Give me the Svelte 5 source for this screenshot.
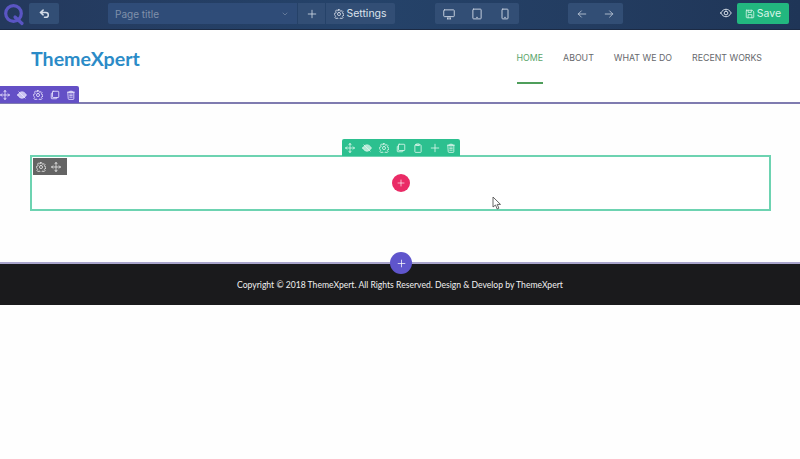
<script>
  const P = {
    move: 'M8 1v14M1 8h14M8 1 6 3M8 1l2 2M8 15l-2-2M8 15l2-2M1 8l2-2M1 8l2 2M15 8l-2-2M15 8l-2 2',
    eye: 'M1 8c2-3.500 4.500-5 7-5s5 1.500 7 5c-2 3.500-4.500 5-7 5s-5-1.500-7-5zM3 3l10 10',
    eyeopen: 'M1 8c2-3.500 4.500-5 7-5s5 1.500 7 5c-2 3.500-4.500 5-7 5s-5-1.500-7-5zM8 5.500a2.500 2.500 0 1 0 0 5 2.500 2.500 0 0 0 0-5z',
    gear: 'M6.800 1h2.400l.4 2 1.500.7 1.800-1.100 1.600 1.700-1.100 1.700.7 1.500 1.900.4v2.300l-1.900.4-.7 1.500 1.100 1.800-1.600 1.600-1.800-1.100-1.500.7-.4 1.900H6.800l-.4-1.900-1.500-.7-1.800 1.100-1.600-1.600 1.100-1.800-.7-1.500L.9 9.200V6.900l1.900-.4.7-1.500-1.100-1.700 1.600-1.700 1.800 1.100 1.500-.7zM8 5.500a2.500 2.500 0 1 0 0 5 2.500 2.500 0 0 0 0-5z',
    copy: 'M5 2h8a1 1 0 0 1 1 1v8a1 1 0 0 1-1 1H5a1 1 0 0 1-1-1V3a1 1 0 0 1 1-1zM4 5H3a1 1 0 0 0-1 1v7a1 1 0 0 0 1 1h7a1 1 0 0 0 1-1v-1',
    paste: 'M4 3h8a1 1 0 0 1 1 1v10a1 1 0 0 1-1 1H4a1 1 0 0 1-1-1V4a1 1 0 0 1 1-1zM6 1.500h4V4H6z',
    plus: 'M8 2v12M2 8h12',
    trash: 'M2.500 3.500h11M6 3.500V2h4v1.500M3.500 3.500h9V14a1 1 0 0 1-1 1h-7a1 1 0 0 1-1-1zM6 6.500h4M6 9h4M6 11.500h4',
    undo: 'M6 3 2 6.500 6 10M2 6.500h8a3.500 3.500 0 0 1 0 7H8',
    chev: 'M4 6l4 4 4-4',
    desktop: 'M2 2.500h12a1 1 0 0 1 1 1v7a1 1 0 0 1-1 1H2a1 1 0 0 1-1-1v-7a1 1 0 0 1 1-1zM6 14.500h4M7 11.500l-1 3M9 11.500l1 3',
    tablet: 'M3.500 1.500h9a1 1 0 0 1 1 1v11a1 1 0 0 1-1 1h-9a1 1 0 0 1-1-1v-11a1 1 0 0 1 1-1zM7.500 12.500h1',
    phone: 'M5 1.500h6a1 1 0 0 1 1 1v11a1 1 0 0 1-1 1H5a1 1 0 0 1-1-1v-11a1 1 0 0 1 1-1zM7.500 12.500h1',
    left: 'M14 8H2M7 3 2 8l5 5',
    right: 'M2 8h12M9 3l5 5-5 5',
    save: 'M2.500 2h9l2.500 2.500V13a1 1 0 0 1-1 1H3a1 1 0 0 1-1-1V3a1 1 0 0 1 .500-1zM5 2v3.500h5V2M5 14V9h6v5'
  };
  const rowTools = ['move', 'eye', 'gear', 'copy', 'trash'];
  const colTools = ['move', 'eye', 'gear', 'copy', 'paste', 'plus', 'trash'];
  const nav = ['HOME', 'ABOUT', 'WHAT WE DO', 'RECENT WORKS'];
</script>

{#snippet icon(name, size = 11)}
  <svg class="icon i-{name}" width={size} height={size} viewBox="0 0 16 16" aria-hidden="true"><path d={P[name]} /></svg>
{/snippet}

<div class="page">
  <div class="topbar">
    <svg class="logo" width="22" height="24" viewBox="0 0 22 24" aria-hidden="true">
      <circle cx="10.500" cy="11.500" r="7.800" />
      <path d="M12 15l7 6.500" />
    </svg>
    <button class="btn undo">{@render icon('undo', 11)}</button>
    <div class="title-group">
      <div class="select"><span>Page title</span>{@render icon('chev', 8)}</div>
      <button class="btn add">{@render icon('plus', 10)}</button>
      <button class="btn settings">{@render icon('gear', 10)}<span>Settings</span></button>
    </div>
    <div class="btn-group devices">
      <button class="btn">{@render icon('desktop', 12)}</button>
      <button class="btn">{@render icon('tablet', 12)}</button>
      <button class="btn">{@render icon('phone', 12)}</button>
    </div>
    <div class="btn-group history">
      <button class="btn">{@render icon('left', 10)}</button>
      <button class="btn">{@render icon('right', 10)}</button>
    </div>
    <span class="preview">{@render icon('eyeopen', 12)}</span>
    <button class="save">{@render icon('save', 10)}<span>Save</span></button>
  </div>

  <header class="header">
    <a class="brand" href="#top">ThemeXpert</a>
    <nav class="nav">
      {#each nav as item, i}
        <a class:active={i === 0} href="#top">{item}</a>
      {/each}
    </nav>
    <div class="tools row-tools">
      {#each rowTools as t}{@render icon(t, 10)}{/each}
    </div>
  </header>

  <section class="section">
    <div class="column">
      <div class="tools col-tools">
        {#each colTools as t}{@render icon(t, 10)}{/each}
      </div>
      <div class="mini-tools">
        {@render icon('gear', 10)}{@render icon('move', 10)}
      </div>
      <button class="add-el">{@render icon('plus', 8)}</button>
    </div>
  </section>

  <footer class="footer">
    <button class="add-sec">{@render icon('plus', 9)}</button>
    <p>Copyright © 2018 ThemeXpert. All Rights Reserved. Design &amp; Develop by ThemeXpert</p>
  </footer>

  <svg class="cursor" width="10" height="14" viewBox="0 0 10 14" aria-hidden="true">
    <path d="M1 1v10l2.500-2 1.700 4 1.700-.8-1.700-3.800H8.500z" />
  </svg>
</div>

<style>
  :global(body) { margin: 0; background: #fff; }
  .page {
    position: relative;
    width: 800px;
    height: 459px;
    overflow: hidden;
    background: #fefefe;
    font-family: "Inter", "Liberation Sans", sans-serif;
  }
  .icon { fill: none; stroke: currentColor; stroke-width: 1.300; stroke-linecap: round; stroke-linejoin: round; display: block; flex: none; }
  .i-eye { fill: currentColor; fill-opacity: 0.75; }
  .i-undo { stroke-width: 2.200; }
  button { border: 0; padding: 0; font: inherit; color: inherit; display: flex; align-items: center; justify-content: center; }

  .topbar {
    height: 30px;
    box-sizing: border-box;
    display: flex;
    align-items: flex-start;
    padding-top: 3px;
    background: linear-gradient(90deg, #24395d 0%, #25436a 45%, #233c60 75%, #1f3557 100%);
    border-bottom: 1px solid #1b2a44;
    color: #d7dfea;
    font-size: 10px;
  }
  .logo { flex: none; margin: -1px 0 0 3px; fill: none; stroke: #5a55c4; stroke-width: 3.200; stroke-linecap: round; }
  .btn { background: #324e75; height: 21px; color: #d4dce8; }
  .undo { width: 30px; margin-left: 4px; border-radius: 2px; }
  .title-group { display: flex; gap: 1px; margin-left: 49px; }
  .select {
    width: 189px;
    height: 21px;
    box-sizing: border-box;
    display: flex;
    align-items: center;
    justify-content: space-between;
    padding: 0 8px 0 7px;
    background: #2f4c78;
    color: #7f90aa;
    border-radius: 2px 0 0 2px;
  }
  .add { width: 27px; }
  .settings { width: 69px; gap: 2px; border-radius: 0 2px 2px 0; font-size: 10.500px; color: #dbe2ec; }
  .btn-group { display: flex; gap: 0; border-radius: 2px; overflow: hidden; }
  .devices { margin-left: 40px; }
  .devices .btn { width: 28px; color: #c6d0de; }
  .history { margin-left: 49px; }
  .history .btn { width: 27.500px; color: #c6d0de; }
  .preview { margin: 4px 4px 0 97px; color: #dfe5ee; width: 13px; }
  .save {
    width: 52px;
    height: 21px;
    gap: 2px;
    background: #22b77f;
    color: #d8f5e9;
    border-radius: 2px;
    font-size: 10.500px;
  }

  .header {
    position: relative;
    height: 74px;
    box-sizing: border-box;
    display: flex;
    justify-content: space-between;
    padding: 0 38px 0 31px;
    background: #fff;
    border-bottom: 2px solid #7f7bb0;
  }
  .brand {
    margin-top: 15px;
    font-family: "Lato", "Liberation Sans", sans-serif;
    font-size: 19.600px;
    font-weight: 700;
    line-height: 27px;
    color: #2b8bc7;
    text-decoration: none;
  }
  .nav { display: flex; gap: 20px; }
  .nav a {
    height: 54px;
    box-sizing: border-box;
    padding-top: 22px;
    font-size: 8.800px;
    line-height: 12px;
    color: #66686c;
    text-decoration: none;
    border-bottom: 2px solid transparent;
  }
  .nav a.active { color: #5aa56b; border-bottom-color: #4f9e5b; }

  .tools { position: absolute; display: flex; align-items: center; color: #ece9ff; }
  .row-tools {
    left: 0;
    bottom: -1px;
    width: 79px;
    height: 17px;
    gap: 6.600px;
    box-sizing: border-box;
    background: #6450c6;
    border-radius: 0 2px 0 0;
  }

  .section { height: 158px; padding: 51px 29px 0 30px; box-sizing: border-box; }
  .column {
    position: relative;
    height: 56px;
    box-sizing: border-box;
    border: 2px solid #6dd3b1;
    background: #fff;
  }
  .col-tools {
    left: 310px;
    top: -18px;
    width: 118px;
    height: 17px;
    justify-content: space-around;
    background: #2cc08f;
    border-radius: 2px 2px 0 0;
    color: #dff7ee;
  }
  .mini-tools {
    position: absolute;
    left: 1px;
    top: 1px;
    width: 34px;
    height: 17px;
    box-sizing: border-box;
    padding-left: 3px;
    display: flex;
    align-items: center;
    gap: 5px;
    background: #646464;
    color: #e8e8e8;
  }
  .add-el {
    position: absolute;
    left: 360px;
    top: 17px;
    width: 18px;
    height: 18px;
    border-radius: 50%;
    background: #ea2b66;
    color: #fff;
  }

  .footer {
    position: relative;
    height: 43px;
    box-sizing: border-box;
    background: #1a1a1c;
    border-top: 2px solid #a9a5cc;
    color: #f0f0f0;
  }
  .footer p {
    margin: 0;
    padding-top: 15px;
    text-align: center;
    font-family: "Lato", "Liberation Sans", sans-serif;
    font-size: 8.600px;
    line-height: 13px;
  }
  .add-sec {
    position: absolute;
    left: 390px;
    top: -12px;
    width: 22px;
    height: 22px;
    border-radius: 50%;
    background: #5f55cc;
    color: #fff;
  }
  .cursor { position: absolute; left: 492px; top: 196px; fill: #fff; stroke: #555; stroke-width: 0.900; }
</style>
